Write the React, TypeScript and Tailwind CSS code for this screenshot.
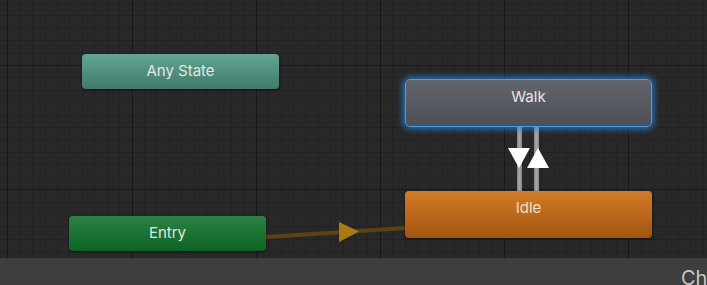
import React from "react";

const W = 707;
const H = 258;
const minor = 12.42;
const ox = 7.3;
const oy = 65 - 5 * 12.42;

function Grid() {
  const v: { p: number; major: boolean }[] = [];
  const h: { p: number; major: boolean }[] = [];
  for (let k = -1; ox + k * minor < W + 2; k++) {
    v.push({ p: Math.round(ox + k * minor) + 0.5, major: ((k % 10) + 10) % 10 === 0 });
  }
  for (let k = -1; oy + k * minor < H + 2; k++) {
    h.push({ p: Math.round(oy + k * minor) + 0.5, major: ((k - 5) % 10 + 10) % 10 === 0 });
  }
  return (
    <svg className="absolute inset-0" width={W} height={H} shapeRendering="crispEdges">
      {v.filter((l) => !l.major).map((l, i) => (
        <line key={"v" + i} x1={l.p} x2={l.p} y1={0} y2={H} stroke="#222222" strokeWidth={1} />
      ))}
      {h.filter((l) => !l.major).map((l, i) => (
        <line key={"h" + i} y1={l.p} y2={l.p} x1={0} x2={W} stroke="#222222" strokeWidth={1} />
      ))}
      {v.filter((l) => l.major).map((l, i) => (
        <line key={"V" + i} x1={l.p} x2={l.p} y1={0} y2={H} stroke="#191919" strokeWidth={1} />
      ))}
      {h.filter((l) => l.major).map((l, i) => (
        <line key={"H" + i} y1={l.p} y2={l.p} x1={0} x2={W} stroke="#191919" strokeWidth={1} />
      ))}
    </svg>
  );
}

function Transitions() {
  return (
    <svg className="absolute inset-0" width={W} height={H}>
      {/* Entry -> Idle */}
      <line x1={266} y1={237} x2={406} y2={228} stroke="#5c4210" strokeWidth={4} />
      <polygon points="339,222 339,242 359,231.5" fill="#a87a14" />
      {/* Walk <-> Idle */}
      <rect x={517} y={127} width={5} height={64} fill="#8e8e8e" />
      <rect x={518.5} y={127} width={2} height={64} fill="#a6a6a6" />
      <rect x={534} y={127} width={5} height={64} fill="#8e8e8e" />
      <rect x={535.5} y={127} width={2} height={64} fill="#a6a6a6" />
      <polygon points="508,148 530,148 519,168" fill="#ffffff" />
      <polygon points="527,168 549,168 538,148" fill="#ffffff" />
    </svg>
  );
}

export default function App() {
  return (
    <div
      className="relative w-[707px] h-[285px] overflow-hidden bg-[#282828] flex flex-col"
      style={{ fontFamily: "Inter, 'Noto Sans', sans-serif" }}
    >
      <div className="relative h-[258px] shrink-0">
        <Grid />
        <Transitions />
        <div className="absolute left-[82px] top-[54px] w-[197px] h-[35px] rounded-[4px] bg-[linear-gradient(#62a592,#417a6b)] shadow-[0_1px_2px_rgba(0,0,0,0.6)] flex items-center justify-center text-[15px] text-[#e2e6e4]">
          Any State
        </div>
        <div className="absolute left-[405px] top-[79px] w-[247px] h-[48px] rounded-[5px] bg-[linear-gradient(#62656c,#4c4f55)] border border-[#4a9ee8] shadow-[0_0_6px_2px_rgba(40,135,230,0.8)] flex justify-center pt-[6px] text-[15px] text-[#e6e6e6]">
          Walk
        </div>
        <div className="absolute left-[405px] top-[191px] w-[247px] h-[47px] rounded-[4px] bg-[linear-gradient(#d27c27,#a2540f)] shadow-[0_1px_3px_rgba(0,0,0,0.6)] flex justify-center pt-[6px] text-[15px] text-[#ece0d2]">
          Idle
        </div>
        <div className="absolute left-[69px] top-[216px] w-[197px] h-[35px] rounded-[4px] bg-[linear-gradient(#2d8244,#0b6324)] shadow-[0_1px_2px_rgba(0,0,0,0.6)] flex items-center justify-center text-[15px] text-[#dfe9e1]">
          Entry
        </div>
      </div>
      <div className="h-[27px] bg-[#3e3e3e] flex items-start overflow-hidden pl-[681px] pt-[10px]">
        <span className="whitespace-nowrap text-[20px] text-[#c8c8c8] leading-[20px]">
          Children
        </span>
      </div>
    </div>
  );
}
